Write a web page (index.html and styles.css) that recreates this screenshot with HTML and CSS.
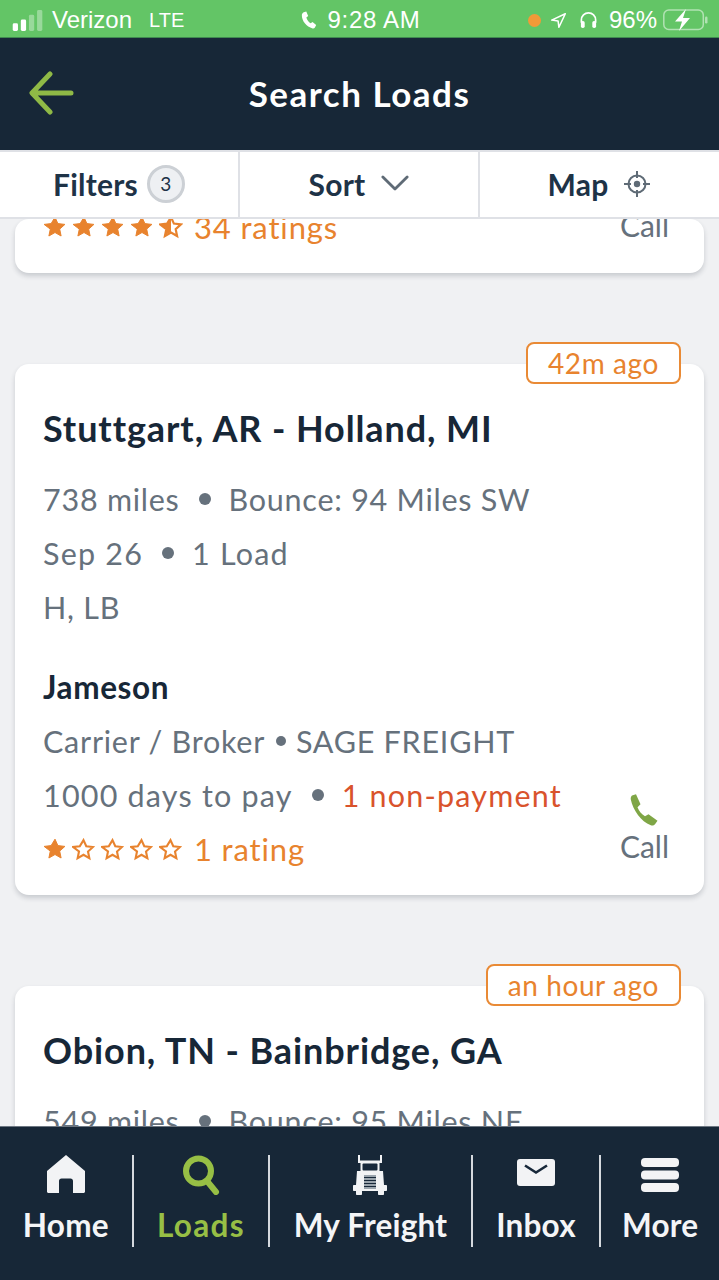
FILE: index.html
```html
<!DOCTYPE html>
<html lang="en">
<head>
<meta charset="utf-8">
<title>Search Loads</title>
<link rel="stylesheet" href="styles.css">
</head>
<body>
<svg class="defs" width="0" height="0" aria-hidden="true">
  <defs>
    <path id="star" d="M12 2.2l2.9 6.4 7 .8-5.2 4.7 1.4 6.9-6.1-3.5-6.1 3.5 1.4-6.9L1.1 9.4l7-.8z"/>
  </defs>
</svg>
<div class="app">
  <div class="status">
    <div class="st-left">
      <svg class="signal" viewBox="0 0 32 22"><rect x="0" y="14" width="5.5" height="8" rx="1.5" fill="#fff"/><rect x="8.5" y="10" width="5.5" height="12" rx="1.5" fill="#fff"/><rect x="17" y="5" width="5.5" height="17" rx="1.5" fill="#fff" opacity=".35"/><rect x="25.5" y="0" width="5.5" height="22" rx="1.5" fill="#fff" opacity=".35"/></svg>
      <span class="carrier">Verizon</span><span class="net">LTE</span>
    </div>
    <div class="st-center">
      <svg viewBox="0 0 24 24" width="19" height="19"><path fill="#fff" d="M6 1.500l3.200-.8 2.400 5.600-2.300 1.900c.8 3 2.700 5.600 5.400 7.300l2.400-1.600 4.600 3.900-1.600 3.100c-.6 1-1.800 1.500-2.900 1.200C9.400 20 3.400 12.700 3.600 5.200c0-1.700 1-3.100 2.400-3.700z"/></svg>
      <span>9:28 AM</span>
    </div>
    <div class="st-right">
      <span class="dot"></span>
      <svg class="loc" viewBox="0 0 20 20" width="17" height="17"><path fill="none" stroke="#fff" stroke-width="1.800" stroke-linejoin="round" d="M18 2L2 9.500l7.500 1 1 7.500z"/></svg>
      <svg class="phones" viewBox="0 0 20 20" width="19" height="20"><path fill="none" stroke="#fff" stroke-width="1.800" d="M2.500 13v-3a7.500 7.500 0 0 1 15 0v3"/><rect x="2" y="11" width="4" height="7.500" rx="1.800" fill="#fff"/><rect x="14" y="11" width="4" height="7.500" rx="1.800" fill="#fff"/></svg>
      <span class="pct">96%</span>
      <svg class="batt" viewBox="0 0 46 22" width="46" height="22"><rect x=".8" y="1" width="39.500" height="19.500" rx="5" fill="none" stroke="#fff" stroke-opacity=".5" stroke-width="1.500"/><rect x="42" y="7.500" width="2.500" height="7" rx="1.200" fill="#fff" opacity=".5"/><path fill="#fff" d="M23 0L12 12.500h7L16 22l11-13h-7z"/></svg>
    </div>
  </div>

  <header class="top">
    <svg class="back" viewBox="0 0 46 44" width="46" height="44"><path fill="none" stroke="#8fb946" stroke-width="5" stroke-linecap="round" stroke-linejoin="round" d="M42 22H4M21 3L3 22l18 19"/></svg>
    <h1 class="title">Search Loads</h1>
  </header>

  <nav class="tabs">
    <div class="tab">
      <span>Filters</span><span class="count">3</span>
    </div>
    <div class="tab">
      <span>Sort</span>
      <svg viewBox="0 0 30 18" width="28" height="17"><path fill="none" stroke="#5f6b76" stroke-width="3" stroke-linecap="round" stroke-linejoin="round" d="M2 2l13 13L28 2"/></svg>
    </div>
    <div class="tab">
      <span>Map</span>
      <svg viewBox="0 0 28 28" width="28" height="28"><g fill="none" stroke="#5f6b76" stroke-width="2"><circle cx="14" cy="14" r="8.500"/><path d="M14 1v7M14 20v7M1 14h7M20 14h7"/></g><circle cx="14" cy="14" r="3.200" fill="#5f6b76"/></svg>
    </div>
  </nav>

  <main class="list">
    <article class="card card-first">
      <div class="foot">
        <div class="rating">
          <svg class="star" viewBox="0 0 24 24"><use href="#star"/></svg>
          <svg class="star" viewBox="0 0 24 24"><use href="#star"/></svg>
          <svg class="star" viewBox="0 0 24 24"><use href="#star"/></svg>
          <svg class="star" viewBox="0 0 24 24"><use href="#star"/></svg>
          <svg class="star half" viewBox="0 0 24 24"><use href="#star"/><path class="half-fill" d="M12 2.200v14.600l-6.100 3.500 1.400-6.900L1.100 9.400l7-.8z"/></svg>
          <span>34 ratings</span>
        </div>
        <div class="call call-clipped">Call</div>
      </div>
    </article>

    <article class="card">
      <span class="badge">42m ago</span>
      <h2 class="route">Stuttgart, AR - Holland, MI</h2>
      <p class="line">738 miles<i class="sep"></i>Bounce: 94 Miles SW</p>
      <p class="line line-wide">Sep 26<i class="sep"></i>1 Load</p>
      <p class="line">H, LB</p>
      <h3 class="name">Jameson</h3>
      <p class="line">Carrier / Broker <i class="sep sep-tight"></i>SAGE FREIGHT</p>
      <p class="line line-wide">1000 days to pay<i class="sep"></i><span class="warn">1 non-payment</span></p>
      <div class="foot">
        <div class="rating">
          <svg class="star" viewBox="0 0 24 24"><use href="#star"/></svg>
          <svg class="star empty" viewBox="0 0 24 24"><use href="#star"/></svg>
          <svg class="star empty" viewBox="0 0 24 24"><use href="#star"/></svg>
          <svg class="star empty" viewBox="0 0 24 24"><use href="#star"/></svg>
          <svg class="star empty" viewBox="0 0 24 24"><use href="#star"/></svg>
          <span>1 rating</span>
        </div>
        <div class="call">
          <svg viewBox="0 0 32 32" width="32" height="32"><path fill="#7fa646" d="M3 1.500l4-1.200 4.500 10-3 3c1.500 4 4 7 7.500 9l3.500-2 9 6.500-2.500 3.500c-1 1.200-2.800 1.600-4.200 1C12 27.500 4 16 1.800 5.500 1.500 3.800 2 2.400 3 1.500z"/></svg>
          <span>Call</span>
        </div>
      </div>
    </article>

    <article class="card">
      <span class="badge">an hour ago</span>
      <h2 class="route">Obion, TN - Bainbridge, GA</h2>
      <p class="line">549 miles<i class="sep"></i>Bounce: 95 Miles NE</p>
    </article>
  </main>

  <nav class="bottom">
    <div class="item">
      <svg viewBox="0 0 40 40" width="40" height="40"><path fill="#f2f3f5" d="M20 1L1 17v20.500c0 .8.700 1.500 1.500 1.500H13V27c0-1.500 1-2.500 2.500-2.500h9c1.500 0 2.500 1 2.500 2.500v12h10.500c.8 0 1.500-.7 1.500-1.500V17z" transform="translate(0 -1)"/></svg>
      <span>Home</span>
    </div>
    <i class="div"></i>
    <div class="item active">
      <svg viewBox="0 0 40 40" width="40" height="40"><circle cx="17.500" cy="16" r="12.500" fill="none" stroke="#97bf45" stroke-width="6"/><path stroke="#97bf45" stroke-width="6" stroke-linecap="round" d="M26 26l9 11"/></svg>
      <span>Loads</span>
    </div>
    <i class="div"></i>
    <div class="item">
      <svg viewBox="0 0 34 40" width="34" height="40"><path fill="#f2f3f5" d="M5 0h2v5.500h20V0h2v8h-2.500v8H30l1 14h2c.6 0 1 .4 1 1v4c0 .6-.4 1-1 1h-2v3c0 .6-.4 1-1 1h-4c-.6 0-1-.4-1-1v-3H9v3c0 .6-.4 1-1 1H4c-.6 0-1-.4-1-1v-3H1c-.6 0-1-.4-1-1v-4c0-.6.4-1 1-1h2l1-14h3.500V8H5z"/><rect x="9.500" y="8.500" width="15" height="7" rx="1" fill="#17283a"/><rect x="11" y="20" width="12" height="14" fill="#9aa4ad"/><path stroke="#17283a" stroke-width="1.100" d="M11 22.500h12M11 25.500h12M11 28.500h12M11 31.500h12"/></svg>
      <span>My Freight</span>
    </div>
    <i class="div"></i>
    <div class="item">
      <svg viewBox="0 0 40 40" width="40" height="40"><rect x="1" y="4" width="38" height="27" rx="3" fill="#f2f3f5"/><path fill="none" stroke="#17283a" stroke-width="2.600" d="M9 10.500l11 7 11-7"/></svg>
      <span>Inbox</span>
    </div>
    <i class="div"></i>
    <div class="item">
      <svg viewBox="0 0 40 40" width="40" height="40"><rect x="1" y="3" width="38" height="9" rx="4" fill="#f2f3f5"/><rect x="1" y="15.500" width="38" height="9" rx="4" fill="#f2f3f5"/><rect x="1" y="28" width="38" height="9" rx="4" fill="#f2f3f5"/></svg>
      <span>More</span>
    </div>
  </nav>
</div>
</body>
</html>
```

FILE: styles.css
```css
* { box-sizing: border-box; }
html, body { margin: 0; padding: 0; }
body { font-family: "Lato", "Open Sans", sans-serif; background: #f0f1f3; }
.defs { display: block; height: 0; }

.app { width: 719px; height: 1280px; display: flex; flex-direction: column; overflow: hidden; }

.status { flex: 0 0 38px; background: #63c566; color: #fff; display: grid; grid-template-columns: 1fr auto 1fr; align-items: center; padding: 3px 10px 0 12px; font-family: "Liberation Sans", sans-serif; font-size: 24px; border-bottom: 1px solid #3f8a50; }
.st-left, .st-center, .st-right { display: flex; align-items: center; }
.st-left { gap: 8px; }
.signal { width: 32px; height: 21px; }
.net { margin-left: 9px; font-size: 20px; }
.st-center { gap: 10px; letter-spacing: .7px; margin-left: -2px; }
.st-right { justify-content: flex-end; }
.dot { width: 13px; height: 13px; border-radius: 50%; background: #f29a38; }
.loc { margin-left: 9px; }
.phones { margin-left: 12px; }
.pct { margin-left: 11px; }
.batt { margin-left: 6px; }

.top { flex: 0 0 112px; background: #172737; display: flex; align-items: center; justify-content: center; position: relative; }
.back { position: absolute; left: 29px; top: 33px; }
.title { margin: 0 0 2px; color: #fff; font-size: 35px; font-weight: 700; letter-spacing: 1.5px; }

.tabs { flex: 0 0 69px; background: #fff; display: grid; grid-template-columns: 240px 240px 1fr; border-top: 2px solid #dfe1e6; border-bottom: 2px solid #dfe1e6; color: #1e3347; font-size: 30px; font-weight: 700; letter-spacing: .2px; position: relative; z-index: 2; }
.tab { display: flex; align-items: center; justify-content: center; gap: 9px; padding-bottom: 2px; border-right: 2px solid #dfe1e6; }
.tab:nth-child(2) { gap: 16px; }
.tab:nth-child(3) { border-right: 0; gap: 15px; }
.count { width: 38px; height: 38px; border: 3px solid #ccd0d5; border-radius: 50%; background: #eef0f3; display: flex; align-items: center; justify-content: center; font-size: 19px; font-weight: 400; }

.list { flex: 1; min-height: 0; overflow: hidden; padding: 0 15px; display: flex; flex-direction: column; gap: 91px; }
.card { flex: none; position: relative; background: #fff; border-radius: 14px; box-shadow: 0 3px 5px rgba(40, 50, 65, .2); padding: 42px 28px 19px; }
.card-first { height: 54px; padding: 0 28px; overflow: visible; }
.card-first .foot { margin-top: -1px; height: 36px; }

.badge { position: absolute; top: -22px; right: 23px; height: 42px; padding: 0 20px; display: flex; align-items: center; background: #fff; border: 2px solid #e98a35; border-radius: 8px; color: #e8832e; font-size: 28px; letter-spacing: .6px; }

.route { margin: 0 0 22px; color: #172737; font-size: 36px; line-height: 44px; font-weight: 700; letter-spacing: .9px; }
.line { margin: 0; height: 54px; display: flex; align-items: center; color: #66717c; font-size: 30.5px; letter-spacing: .75px; white-space: pre; }
.line-wide { letter-spacing: 1.2px; }
.sep { width: 12px; height: 12px; border-radius: 50%; background: #66717c; margin: 0 18px 0 19px; }
.sep-tight { margin: 0 10px 0 3px; width: 10px; height: 10px; }
.warn { color: #d9532c; }
.name { margin: 26px 0 0; height: 54px; line-height: 54px; color: #172737; font-size: 31.5px; font-weight: 700; letter-spacing: .6px; }

.foot { display: flex; justify-content: space-between; align-items: flex-end; height: 54px; }
.rating { display: flex; align-items: center; height: 54px; color: #e8832e; font-size: 31px; letter-spacing: .85px; }
.rating span { margin-left: 6px; }
.star { width: 24px; height: 24px; margin: 0 5px 0 0; fill: #e8832e; stroke: #e8832e; stroke-width: 1; flex: none; }
.empty { fill: #fff; stroke-width: 2.2; width: 23px; height: 23px; margin: 0 6px 0 0; }
.half { fill: #fff; stroke-width: 2.2; }
.half-fill { fill: #e8832e; stroke: none; }
.call { display: flex; flex-direction: column; align-items: center; color: #66717c; font-size: 30px; line-height: 34px; margin-right: 7px; position: relative; top: -13px; }
.call svg { position: absolute; top: -35px; left: 9px; }
.call-clipped { top: -12px; }

.bottom { flex: 0 0 154px; background: #172737; display: flex; align-items: flex-start; padding-top: 28px; color: #f4f5f7; font-size: 31.5px; font-weight: 700; letter-spacing: .2px; border-top: 1px solid #6d7782; margin-top: -1px; position: relative; z-index: 2; }
.item { display: flex; flex-direction: column; align-items: center; justify-content: space-between; height: 89px; white-space: nowrap; }
.item:nth-of-type(1) { width: 132px; }
.item.active { width: 135px; color: #97bf45; letter-spacing: 1.3px; }
.item:nth-of-type(3) { width: 201px; }
.item:nth-of-type(4) { width: 127px; }
.item:nth-of-type(5) { width: 118px; }
.div { flex: none; width: 2px; height: 92px; background: #d5d9de; }
```
